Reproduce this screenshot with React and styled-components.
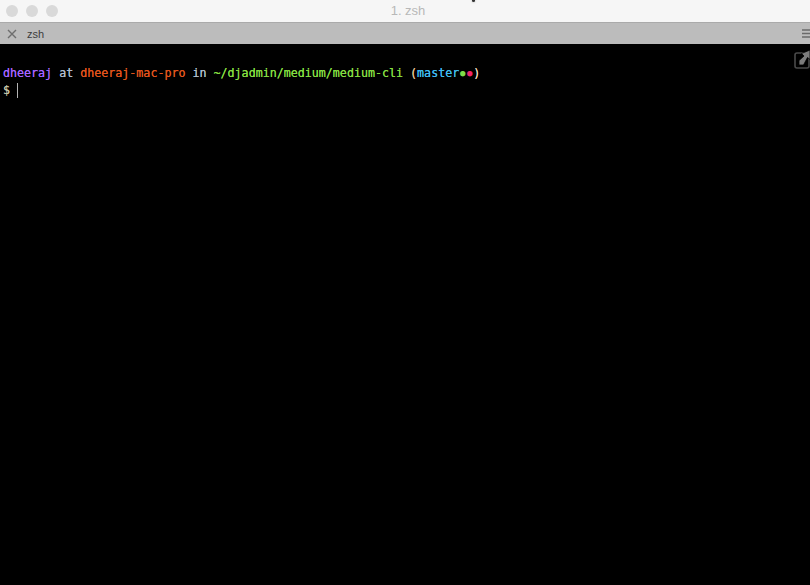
import React from "react";
import styled, { createGlobalStyle } from "styled-components";

const GlobalStyle = createGlobalStyle`
    html, body {
        margin: 0;
        padding: 0;
        background-color: #000;
    }
`;

const Window = styled.div`
    width: 810px;
    height: 585px;
    overflow: hidden;
    display: flex;
    flex-direction: column;
    background-color: #000;
`;

const TitleBar = styled.div`
    position: relative;
    height: 22px;
    flex-shrink: 0;
    display: flex;
    align-items: center;
    justify-content: center;
    background-color: #f6f6f6;
    border-bottom: 1px solid #aaa;
`;

const Lights = styled.div`
    position: absolute;
    left: 6px;
    top: 5px;
    display: flex;
    gap: 8px;
`;

const Light = styled.div`
    width: 12px;
    height: 12px;
    border-radius: 50%;
    background-color: #d9d9d9;
`;

const WindowTitle = styled.div`
    font-family: "Liberation Sans", Arial, sans-serif;
    font-size: 13px;
    color: #b8b8b8;
    margin-left: 6px;
    margin-top: -1px;
`;

const Pointer = styled.div`
    position: absolute;
    left: 472px;
    top: 0;
    width: 3px;
    height: 2px;
    border-radius: 0 0 2px 2px;
    background-color: #333;
    box-shadow: 0 0 2px #999;
`;

const TabBar = styled.div`
    height: 21px;
    flex-shrink: 0;
    display: flex;
    align-items: center;
    padding-left: 7px;
    background-color: #bcbcbc;
`;

const TabClose = styled.svg`
    width: 10px;
    height: 10px;
    margin-right: 10px;
`;

const TabName = styled.div`
    font-family: "Liberation Sans", Arial, sans-serif;
    font-size: 11px;
    color: #3c3c3c;
`;

const TabMenu = styled.svg`
    width: 8px;
    height: 9px;
    margin-left: auto;
`;

const Terminal = styled.div`
    position: relative;
    flex: 1;
    padding: 21px 0 0 3px;
    background-color: #000;
    font-family: "DejaVu Sans Mono", monospace;
    font-size: 11.67px;
    line-height: 17px;
    white-space: pre;
`;

const Line = styled.div`
    height: 17px;
    display: flex;
    align-items: center;
`;

const Seg = styled.span`
    color: ${(props) => props.color};
    text-shadow: 0 0 0.6px ${(props) => props.color};
`;

const Dot = styled.span`
    width: 7px;
    text-align: center;
    font-size: 9px;
    color: ${(props) => props.color};
`;

const Cursor = styled.span`
    width: 1px;
    height: 15px;
    margin-left: 7px;
    background-color: #b4b4b4;
`;

const BroadcastIcon = styled.svg`
    position: absolute;
    right: 0;
    top: 6px;
    width: 16px;
    height: 19px;
`;

const App = () => {
    return (
        <>
            <GlobalStyle />
            <Window>
                <TitleBar>
                    <Lights>
                        <Light />
                        <Light />
                        <Light />
                    </Lights>
                    <WindowTitle>1. zsh</WindowTitle>
                    <Pointer />
                </TitleBar>
                <TabBar>
                    <TabClose viewBox="0 0 10 10">
                        <path d="M1 1 L9 9 M9 1 L1 9" stroke="#6e6e6e" strokeWidth="1.4" fill="none" />
                    </TabClose>
                    <TabName>zsh</TabName>
                    <TabMenu viewBox="0 0 8 9">
                        <path d="M0 1 H8 M0 4.5 H8 M0 8 H8" stroke="#6a6a6a" strokeWidth="1.6" fill="none" />
                    </TabMenu>
                </TabBar>
                <Terminal>
                    <BroadcastIcon viewBox="0 0 16 19">
                        <rect x="1" y="3" width="14" height="15" rx="2" stroke="#4a4a4a" strokeWidth="1.6" fill="none" />
                        <path d="M5 15 L5 10.5 L10 6 L7.5 3.5 L16 0 L16 9.5 L13.5 7.5 L9.5 15 Z" fill="#7c7c7c" stroke="#000" strokeWidth="0.8" />
                    </BroadcastIcon>
                    <Line>
                        <Seg color="#a463ff">dheeraj</Seg>
                        <Seg color="#aebccb"> at </Seg>
                        <Seg color="#e2541c">dheeraj-mac-pro</Seg>
                        <Seg color="#aebccb"> in </Seg>
                        <Seg color="#84de40">~/djadmin/medium/medium-cli</Seg>
                        <Seg color="#aebccb"> </Seg>
                        <Seg color="#e8c090">(</Seg>
                        <Seg color="#3fbcf0">master</Seg>
                        <Dot color="#7fdc4a">●</Dot>
                        <Dot color="#f0246a">●</Dot>
                        <Seg color="#f0d8b8">)</Seg>
                    </Line>
                    <Line>
                        <Seg color="#c4c4a8">$</Seg>
                        <Cursor />
                    </Line>
                </Terminal>
            </Window>
        </>
    );
};

export default App;
